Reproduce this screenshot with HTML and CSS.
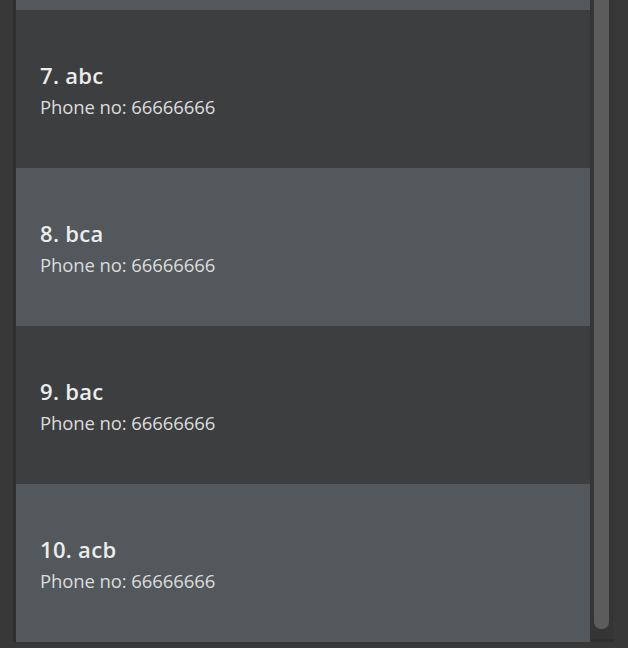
FILE: index.html
```html
<!DOCTYPE html>
<html>
<head>
<meta charset="utf-8">
<link rel="stylesheet" href="styles.css">
</head>
<body>
<div class="frame">
  <div class="list">
    <div class="rows">
      <div class="cell light partial"></div>
      <div class="cell dark"><div class="name">7. abc</div><div class="phone">Phone no: 66666666</div></div>
      <div class="cell light"><div class="name">8. bca</div><div class="phone">Phone no: 66666666</div></div>
      <div class="cell dark"><div class="name">9. bac</div><div class="phone">Phone no: 66666666</div></div>
      <div class="cell light"><div class="name">10. acb</div><div class="phone">Phone no: 66666666</div></div>
    </div>
    <div class="scrollbar"><div class="thumb"></div></div>
  </div>
</div>
</body>
</html>
```
FILE: styles.css
```css
html, body {
  margin: 0;
  padding: 0;
  background: #383838;
  height: 648px;
  overflow: hidden;
  font-family: "Open Sans", "Noto Sans", sans-serif;
}
.frame {
  padding: 0 14px 3px 13px;
  height: 645px;
  box-sizing: border-box;
}
.list {
  display: flex;
  height: 100%;
  border: 3px solid #2f2f2f;
  border-top: none;
  border-right: none;
  background: #393939;
  box-sizing: border-box;
}
.rows {
  width: 574px;
  display: flex;
  flex-direction: column;
}
.cell {
  height: 158px;
  flex: none;
  box-sizing: border-box;
  padding: 0 24px 0 24px;
  display: flex;
  flex-direction: column;
  justify-content: center;
}
.cell.partial { height: 10px; }
.dark { background: #3c3e40; }
.light { background: #52585b; }
.name {
  color: #ececec;
  font-size: 22px;
  font-weight: 600;
  line-height: 30px;
  margin-top: 6px;
  letter-spacing: 0.3px;
}
.phone {
  color: #dcdcdc;
  font-size: 18.5px;
  line-height: 34px;
  letter-spacing: -0.1px;
}
.scrollbar {
  width: 24px;
  padding: 0 5px 6px 4px;
  box-sizing: border-box;
  background: #353535;
}
.thumb {
  height: 100%;
  background: #5c5c5c;
  border-radius: 0 0 7px 7px;
  margin-top: -4px;
}
```
